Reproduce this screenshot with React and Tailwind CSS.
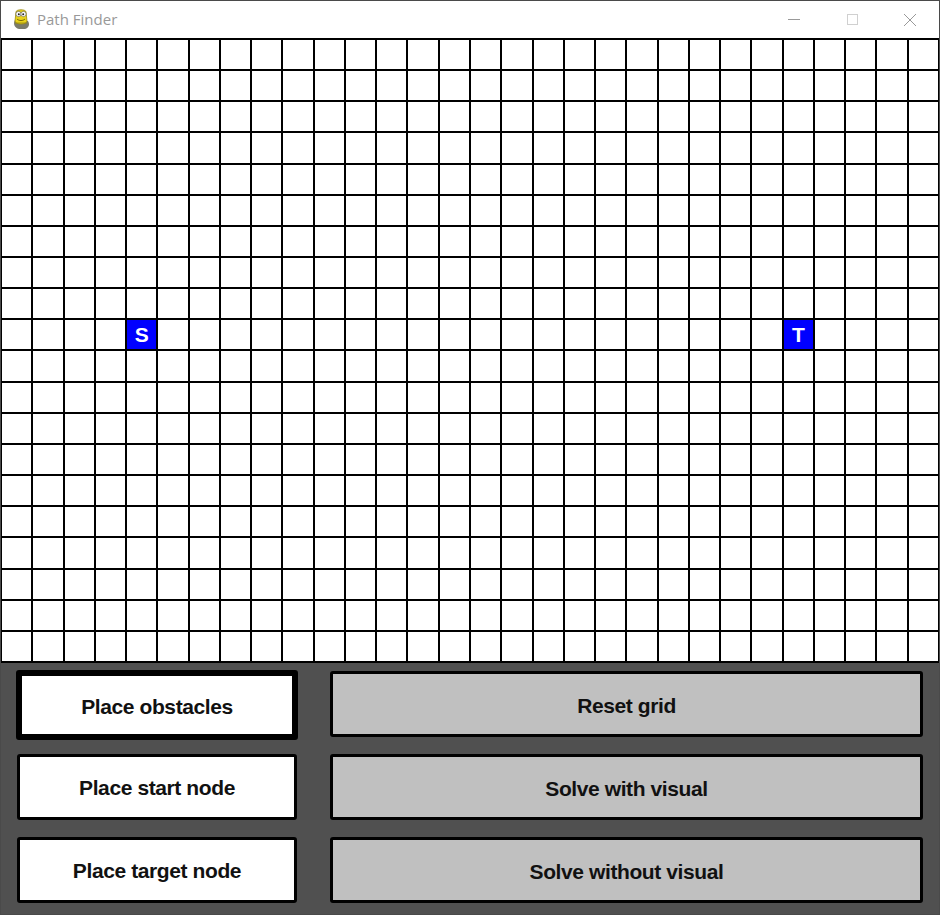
import React from "react";

const COLS = 30;
const ROWS = 20;
const START = { r: 9, c: 4 };
const TARGET = { r: 9, c: 25 };

function PygameIcon() {
  return (
    <svg width="20" height="22" viewBox="0 0 20 22">
      <path d="M4 12 C2 15 3 20 8 21 L14 21 C18 20 19 16 17 13 Z" fill="#7a7a6a" />
      <path d="M5 4 C5 1 15 1 15 4 L16 13 C16 17 4 17 4 13 Z" fill="#e8d21a" stroke="#9a8a10" strokeWidth="0.8" />
      <circle cx="7.5" cy="6" r="2.6" fill="#fff" stroke="#555" strokeWidth="0.6" />
      <circle cx="12.5" cy="6" r="2.6" fill="#fff" stroke="#555" strokeWidth="0.6" />
      <circle cx="7.8" cy="6.3" r="1" fill="#222" />
      <circle cx="12.2" cy="6.3" r="1" fill="#222" />
      <path d="M6 11 C8 13 12 13 14 11" stroke="#6b5a00" strokeWidth="0.9" fill="none" />
      <path d="M4 15 L16 15" stroke="#9a8a10" strokeWidth="0.8" />
    </svg>
  );
}

function Cell({ r, c }) {
  if (r === START.r && c === START.c) {
    return (
      <div className="bg-[#0000ff] flex items-center justify-center text-white text-[21px] font-bold leading-none font-['Liberation_Sans',Arial,sans-serif]">
        S
      </div>
    );
  }
  if (r === TARGET.r && c === TARGET.c) {
    return (
      <div className="bg-[#0000ff] flex items-center justify-center text-white text-[21px] font-bold leading-none font-['Liberation_Sans',Arial,sans-serif]">
        T
      </div>
    );
  }
  return <div className="bg-white" />;
}

function ModeButton({ label, selected }) {
  return (
    <button
      className={
        selected
          ? "-mx-[1px] -mt-[1px] -mb-[3px] pt-[4px] border-[6px] border-black rounded-[3px] bg-white text-[21px] font-bold tracking-[-0.4px] text-[#111] font-['Liberation_Sans',Arial,sans-serif]"
          : "pt-[2px] border-[3px] border-black rounded-[3px] bg-white text-[21px] font-bold tracking-[-0.4px] text-[#111] font-['Liberation_Sans',Arial,sans-serif]"
      }
    >
      {label}
    </button>
  );
}

function ActionButton({ label }) {
  return (
    <button className="pt-[3px] border-[3px] border-black rounded-[3px] bg-[#c0c0c0] text-[21px] font-bold tracking-[-0.4px] text-[#111] font-['Liberation_Sans',Arial,sans-serif]">
      {label}
    </button>
  );
}

export default function App() {
  const cells = [];
  for (let r = 0; r < ROWS; r++) {
    for (let c = 0; c < COLS; c++) {
      cells.push(<Cell key={r + "-" + c} r={r} c={c} />);
    }
  }

  return (
    <div className="w-[940px] h-[915px] border border-[#4a4a4a] bg-[#505050] flex flex-col overflow-hidden">
      {/* Title bar */}
      <div className="h-[37px] shrink-0 bg-white flex items-center">
        <div className="ml-[10px] mt-[-1px]">
          <PygameIcon />
        </div>
        <span className="ml-[6px] text-[15px] text-[#999] font-['Open_Sans','Noto_Sans',sans-serif]">Path Finder</span>
        <div className="ml-auto flex items-center h-full">
          <div className="w-[58px] h-full flex items-center justify-center">
            <div className="w-[12px] h-[1px] bg-[#999]" />
          </div>
          <div className="w-[58px] h-full flex items-center justify-center">
            <div className="w-[11px] h-[11px] border border-[#d0d0d0]" />
          </div>
          <div className="w-[58px] h-full flex items-center justify-center">
            <svg width="14" height="14" viewBox="0 0 14 14">
              <path d="M1 1 L13 13 M13 1 L1 13" stroke="#999" strokeWidth="1" />
            </svg>
          </div>
        </div>
      </div>

      {/* Grid */}
      <div className="h-[625px] shrink-0 bg-black p-[2px] pl-[1px] pr-[1px] grid grid-cols-[repeat(30,minmax(0,1fr))] grid-rows-[repeat(20,minmax(0,1fr))] gap-[2px]">
        {cells}
      </div>

      {/* Controls */}
      <div className="flex-1 pt-[8px] pl-[16px] pr-[16px] pb-[10px] grid grid-cols-[280px_1fr] grid-rows-[66px_66px_66px] gap-x-[33px] gap-y-[17px]">
        <ModeButton label="Place obstacles" selected />
        <ActionButton label="Reset grid" />
        <ModeButton label="Place start node" />
        <ActionButton label="Solve with visual" />
        <ModeButton label="Place target node" />
        <ActionButton label="Solve without visual" />
      </div>
    </div>
  );
}
